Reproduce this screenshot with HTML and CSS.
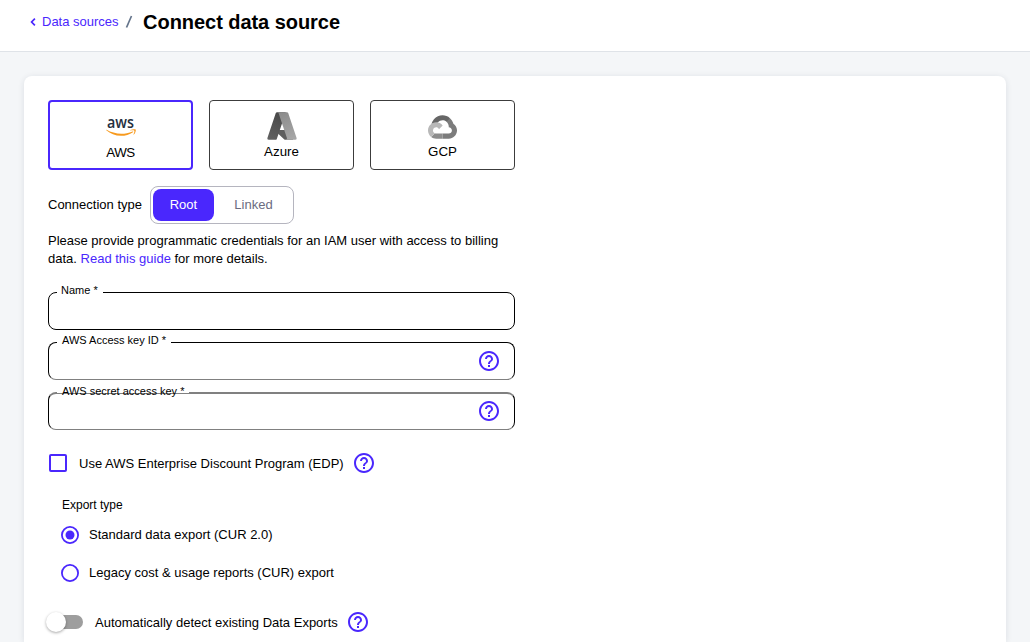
FILE: index.html
```html
<!DOCTYPE html>
<html lang="en">
<head>
<meta charset="utf-8">
<title>Connect data source</title>
<link rel="stylesheet" href="styles.css">
</head>
<body>
<svg class="defs" width="0" height="0">
  <symbol id="help" viewBox="0 0 24 24"><path d="M11 18h2v-2h-2v2zm1-16C6.48 2 2 6.48 2 12s4.480 10 10 10 10-4.480 10-10S17.520 2 12 2zm0 18c-4.410 0-8-3.590-8-8s3.590-8 8-8 8 3.590 8 8-3.590 8-8 8zm0-14c-2.210 0-4 1.790-4 4h2c0-1.100.900-2 2-2s2 .900 2 2c0 2-3 1.750-3 5h2c0-2.250 3-2.500 3-5 0-2.210-1.790-4-4-4z"/></symbol>
</svg>
<header class="topbar">
  <a class="back"><svg class="chevron" viewBox="0 0 6 8"><path d="M4.900.700 1.600 4l3.300 3.300"/></svg>Data sources</a>
  <svg class="slash" viewBox="0 0 8 14"><path d="M6.500 1 1.500 12.500"/></svg>
  <h1 class="title">Connect data source</h1>
</header>
<main class="card">
  <div class="providers">
    <button class="provider selected">
      <svg class="aws" viewBox="0 0 30 22">
        <text class="aws-word" x="1" y="13.300" textLength="27" lengthAdjust="spacingAndGlyphs">aws</text>
        <g class="smile" transform="translate(0 3) scale(.0987)"><path d="M273.500 143.700c-32.900 24.300-80.700 37.200-121.800 37.200-57.600 0-109.500-21.300-148.700-56.700-3.100-2.800-.3-6.600 3.400-4.400 42.400 24.600 94.700 39.500 148.800 39.500 36.500 0 76.600-7.600 113.500-23.200 5.500-2.500 10.200 3.600 4.800 7.600z"/><path d="M287.200 128.100c-4.200-5.400-27.800-2.600-38.500-1.300-3.200.4-3.700-2.400-.8-4.500 18.800-13.200 49.700-9.400 53.300-5 3.600 4.500-1 35.400-18.600 50.200-2.700 2.300-5.300 1.100-4.100-1.900 4-9.900 12.900-32.200 8.700-37.500z"/></g>
      </svg>
      <span>AWS</span>
    </button>
    <button class="provider">
      <svg class="azure" viewBox="0 0 96 96">
        <defs>
          <linearGradient id="az1" x1=".6" y1="0" x2=".3" y2="1"><stop stop-color="#484848"/><stop offset="1" stop-color="#606060"/></linearGradient>
          <linearGradient id="az2" x1=".3" y1="0" x2=".6" y2="1"><stop stop-color="#8c8c8c"/><stop offset="1" stop-color="#a6a6a6"/></linearGradient>
        </defs>
        <path fill="#5e5e5e" d="M71.175 60.261h-41.290a1.911 1.911 0 0 0-1.305 3.309l26.532 24.764a4.171 4.171 0 0 0 2.846 1.121h23.380z"/>
        <path fill="url(#az1)" d="M33.338 6.544h26.038l-27.030 80.087a4.152 4.152 0 0 1-3.933 2.824H8.149a4.145 4.145 0 0 1-3.928-5.470L29.404 9.368a4.152 4.152 0 0 1 3.934-2.825z"/>
        <path fill="url(#az2)" d="M66.595 9.364a4.145 4.145 0 0 0-3.928-2.820H33.648a4.146 4.146 0 0 1 3.928 2.820l25.184 74.620a4.146 4.146 0 0 1-3.928 5.472h29.020a4.146 4.146 0 0 0 3.927-5.472z"/>
      </svg>
      <span>Azure</span>
    </button>
    <button class="provider">
      <svg class="gcp" viewBox="0 0 256 206">
        <path fill="#666" d="M170.252 56.819 192.495 34.576 193.978 25.210C153.446-11.646 88.976-7.466 52.421 33.950 42.267 45.454 34.734 59.795 30.717 74.573L38.683 73.450 83.169 66.113 86.603 62.601C106.392 40.868 139.850 37.944 162.706 56.439Z"/>
        <path fill="#7c7c7c" d="M224.205 73.918C219.092 55.092 208.596 38.168 194.007 25.224L162.788 56.442C175.971 67.213 183.487 83.435 183.170 100.455V105.997C198.520 105.997 210.958 118.439 210.958 133.785 210.958 149.134 198.516 161.277 183.167 161.277H127.465V205.797H183.167C223.118 206.108 255.767 174.178 256.078 134.228 256.265 110.013 244.273 87.414 224.205 73.918Z"/>
        <path fill="#8c8c8c" d="M71.870 205.796H127.464V161.277H71.870C67.910 161.277 63.996 160.425 60.400 158.784L28.150 190.960C40.720 200.460 56.100 205.880 71.870 205.796Z"/>
        <path fill="#b8b8b8" d="M71.870 61.425C31.918 61.664-.277 94.247 0 134.200 .094 156.511 10.505 177.522 28.150 191.161L60.399 158.912C46.412 152.593 40.200 136.130 46.518 122.143 52.838 108.156 69.300 101.943 83.285 108.263 89.448 111.048 94.385 115.986 97.170 122.149L129.420 89.900C115.698 71.959 94.400 61.380 71.870 61.425Z"/>
      </svg>
      <span>GCP</span>
    </button>
  </div>
  <div class="connection">
    <span>Connection type</span>
    <div class="segmented"><span class="segment active">Root</span><span class="segment">Linked</span></div>
  </div>
  <p class="intro">Please provide programmatic credentials for an IAM user with access to billing data. <a class="link">Read this guide</a> for more details.</p>
  <div class="fields">
    <div class="field name"><label class="label">Name *</label></div>
    <div class="field soft-bottom"><label class="label">AWS Access key ID *</label><svg class="help"><use href="#help"/></svg></div>
    <div class="field soft-bottom soft-top"><label class="label">AWS secret access key *</label><svg class="help"><use href="#help"/></svg></div>
  </div>
  <div class="discount"><span class="checkbox"></span><span class="text">Use AWS Enterprise Discount Program (EDP)</span><svg class="help"><use href="#help"/></svg></div>
  <div class="exports">
    <div class="exports-title">Export type</div>
    <div class="option"><svg class="radio" viewBox="2 2 20 20"><circle cx="12" cy="12" r="9"/><circle class="dot" cx="12" cy="12" r="5"/></svg><span class="text">Standard data export (CUR 2.0)</span></div>
    <div class="option"><svg class="radio" viewBox="2 2 20 20"><circle cx="12" cy="12" r="9"/></svg><span class="text">Legacy cost &amp; usage reports (CUR) export</span></div>
  </div>
  <div class="detect"><span class="switch"><span class="thumb"></span></span><span class="text">Automatically detect existing Data Exports</span><svg class="help"><use href="#help"/></svg></div>
</main>
</body>
</html>
```
FILE: styles.css
```css
* { box-sizing: border-box; }
body {
  margin: 0;
  height: 642px;
  overflow: hidden;
  background: #f4f6f8;
  color: #000;
  font: 13px/18px "Liberation Sans", Arial, sans-serif;
}
svg { display: block; flex: none; }
.defs { position: absolute; }
.topbar {
  display: flex;
  height: 52px;
  padding: 0 0 8px 30px;
  align-items: center;
  background: #fff;
  border-bottom: 1px solid #dfe3e8;
}
.back { display: flex; align-items: center; color: #4a27fd; }
.chevron { width: 6px; height: 8px; margin-right: 6px; fill: none; stroke: #4a27fd; stroke-width: 1.7; }
.slash { width: 8px; height: 14px; margin: 0 10.500px 0 6px; fill: none; stroke: #64748b; stroke-width: 1.700; }
.title { margin: 0; font-size: 20px; line-height: 24px; font-weight: 700; letter-spacing: -.05px; }
.card {
  width: 982px;
  height: 566px;
  margin: 24px 0 0 24px;
  padding: 24px 24px 0;
  border-radius: 8px 8px 0 0;
  background: #fff;
  box-shadow: 0 1px 6px rgba(30, 40, 60, .11);
}
.providers { display: flex; gap: 16px; }
.provider {
  display: flex;
  flex-direction: column;
  align-items: center;
  justify-content: flex-end;
  width: 145px;
  height: 70px;
  padding: 0 0 9px;
  border: 1px solid #3c3c3c;
  border-radius: 4px;
  background: #fff;
  color: #000;
  font: 13.333px/16px "Liberation Sans", Arial, sans-serif;
}
.provider.selected { border: 2px solid #4a27fd; padding-bottom: 7px; }
.selected span { letter-spacing: -.5px; }
.aws { width: 30px; height: 22px; margin-bottom: 8px; overflow: visible; }
.aws-word { font: 600 16.500px "Open Sans", sans-serif; fill: #252f3e; }
.smile { fill: #f79a1e; }
.azure { width: 32px; height: 32px; margin-bottom: 2px; }
.gcp { width: 29px; height: 24px; margin-bottom: 5px; }
.connection { display: flex; align-items: center; gap: 8px; margin-top: 16px; height: 38px; }
.segmented {
  display: flex;
  width: 144px;
  height: 38px;
  padding: 2px;
  border: 1px solid #b5b5bf;
  border-radius: 8px;
}
.segment {
  display: flex;
  flex: none;
  align-items: center;
  justify-content: center;
  width: 79px;
  color: #6b6b80;
}
.segment.active { width: 61px; border-radius: 8px; background: #4a27fd; color: #fff; }
.intro { width: 467px; margin: 8px 0 24px; }
.link { color: #4a27fd; }
.fields { display: flex; flex-direction: column; gap: 12px; width: 467px; }
.field {
  display: flex;
  position: relative;
  align-items: center;
  justify-content: flex-end;
  height: 38px;
  padding-right: 13px;
  border: 1px solid #000;
  border-radius: 8px;
}
.soft-bottom { border-bottom-color: #808080; }
.soft-top { border-top: 2px solid #808080; }
.soft-top .help { margin-top: -1px; }
.label {
  position: absolute;
  left: 8px;
  top: -9px;
  padding: 0 5px;
  background: #fff;
  font-size: 11px;
  line-height: 13px;
}
.name .label { padding-left: 4px; }
.soft-top .label { background: linear-gradient(#fff 8px, #808080 8px, #808080 9px, #fff 9px); }
.help { width: 24px; height: 24px; fill: #4a27fd; }
.discount { display: flex; align-items: center; height: 24px; margin-top: 21px; padding-left: 1px; }
.checkbox { width: 18px; height: 18px; margin-right: 12px; border: 2px solid #4a27fd; border-radius: 2px; }
.text { padding-top: 2px; }
.discount .help, .detect .help { margin-left: 8px; }
.exports { padding-left: 14px; margin-top: 20px; }
.exports-title { height: 20px; font-size: 12px; line-height: 20px; }
.option { display: flex; align-items: center; height: 38px; gap: 10px; margin-left: -1px; }
.radio { width: 18px; height: 18px; margin-top: 1px; fill: none; stroke: #4a27fd; stroke-width: 2; }
.dot { fill: #4a27fd; stroke: none; }
.detect { display: flex; align-items: center; height: 24px; margin-top: 19px; }
.switch {
  display: flex;
  align-items: center;
  width: 34px;
  height: 14px;
  margin: 0 12px 0 1px;
  border-radius: 7px;
  background: #9e9e9e;
}
.thumb {
  flex: none;
  width: 20px;
  height: 20px;
  margin-left: -3px;
  border-radius: 50%;
  background: #fff;
  box-shadow: 0 1px 3px rgba(0, 0, 0, .35);
}
```
